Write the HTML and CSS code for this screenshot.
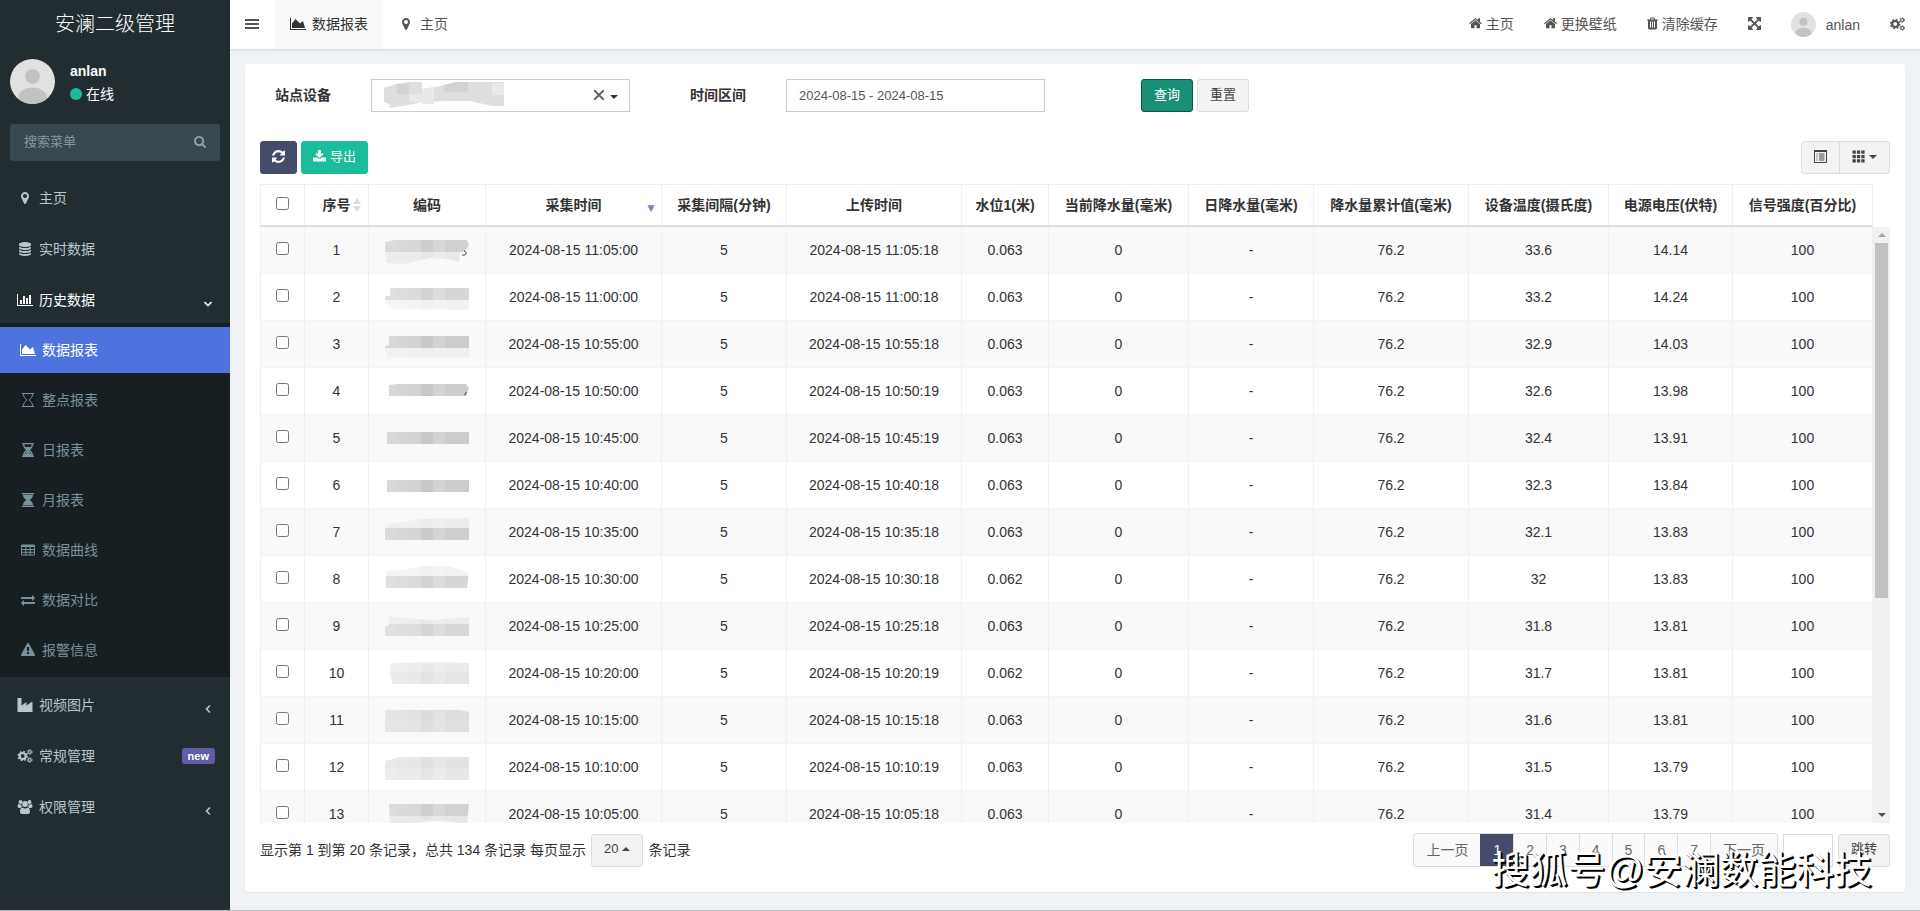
FILE: index.html
```
<!DOCTYPE html>
<html lang="zh-CN">
<head>
<meta charset="utf-8">
<title>数据报表</title>
<link rel="stylesheet" href="styles.css">
</head>
<body>
<svg class="sprite" aria-hidden="true">
  <symbol id="i-bars" viewBox="0 0 14 14"><path d="M0 2h14v2H0zM0 6h14v2H0zM0 10h14v2H0z"/></symbol>
  <symbol id="i-area" viewBox="0 0 2048 1792"><path d="M2048 1536v128h-2048v-1536h128v1408h1920zm-384-1024l256 896h-1664v-576l448-576 576 576z"/></symbol>
  <symbol id="i-bar" viewBox="0 0 2048 1792"><path d="M640 896v512h-256v-512h256zm384-512v1024h-256v-1024h256zm1024 1152v128h-2048v-1536h128v1408h1920zm-640-896v768h-256v-768h256zm384-384v1152h-256v-1152h256z"/></symbol>
  <symbol id="i-marker" viewBox="0 0 1792 1792"><path d="M1152 640q0-106-75-181t-181-75-181 75-75 181 75 181 181 75 181-75 75-181zm256 0q0 109-33 179l-364 774q-16 33-47.5 52t-67.5 19-67.5-19-46.5-52l-365-774q-33-70-33-179 0-212 150-362t362-150 362 150 150 362z"/></symbol>
  <symbol id="i-home" viewBox="64 96 1664 1664"><path d="M1472 992v480q0 26-19 45t-45 19h-384v-384h-256v384h-384q-26 0-45-19t-19-45v-480q0-1 .5-3t.5-3l575-474 575 474q1 2 1 6zm223-69l-62 74q-8 9-21 11h-3q-13 0-21-7l-692-577-692 577q-12 8-24 7-13-2-21-11l-62-74q-8-10-7-23.5t11-21.5l719-599q32-26 76-26t76 26l244 204v-195q0-14 9-23t23-9h192q14 0 23 9t9 23v408l219 182q10 8 11 21.5t-7 23.5z"/></symbol>
  <symbol id="i-trash" viewBox="192 96 1408 1600"><path d="M704 1376v-704q0-14-9-23t-23-9h-64q-14 0-23 9t-9 23v704q0 14 9 23t23 9h64q14 0 23-9t9-23zm256 0v-704q0-14-9-23t-23-9h-64q-14 0-23 9t-9 23v704q0 14 9 23t23 9h64q14 0 23-9t9-23zm256 0v-704q0-14-9-23t-23-9h-64q-14 0-23 9t-9 23v704q0 14 9 23t23 9h64q14 0 23-9t9-23zm-544-992h448l-48-117q-7-9-17-11h-317q-10 2-17 11zm928 32v64q0 14-9 23t-23 9h-96v948q0 83-47 143.5t-113 60.5h-832q-66 0-113-58.5t-47-141.5v-952h-96q-14 0-23-9t-9-23v-64q0-14 9-23t23-9h309l70-167q15-37 54-63t79-26h320q40 0 79 26t54 63l70 167h309q14 0 23 9t9 23z"/></symbol>
  <symbol id="i-expand" viewBox="128 128 1536 1536"><path d="M1411 541l-355 355 355 355 144-144q29-31 70-14 39 17 39 59v448q0 26-19 45t-45 19h-448q-42 0-59-40-17-39 14-69l144-144-355-355-355 355 144 144q31 30 14 69-17 40-59 40h-448q-26 0-45-19t-19-45v-448q0-42 40-59 39-17 69 14l144 144 355-355-355-355-144 144q-19 19-45 19-12 0-24-5-40-17-40-59v-448q0-26 19-45t45-19h448q42 0 59 40 17 39-14 69l-144 144 355 355 355-355-144-144q-31-30-14-69 17-40 59-40h448q26 0 45 19t19 45v448q0 42-39 59-13 5-25 5-26 0-45-19z"/></symbol>
  <symbol id="i-search" viewBox="64 128 1664 1664"><path d="M1216 832q0-185-131.5-316.5t-316.5-131.5-316.5 131.5-131.5 316.5 131.5 316.5 316.5 131.5 316.5-131.5 131.5-316.5zm512 832q0 52-38 90t-90 38q-54 0-90-38l-343-342q-179 124-399 124-143 0-273.5-55.5t-225-150-150-225-55.5-273.5 55.5-273.5 150-225 225-150 273.5-55.5 273.5 55.5 225 150 150 225 55.5 273.5q0 220-124 399l343 343q37 37 37 90z"/></symbol>
  <symbol id="i-refresh" viewBox="128 128 1536 1536"><path d="M1639 1056q0 5-1 7-64 268-268 434.5t-478 166.5q-146 0-282.5-55t-243.5-157l-129 129q-19 19-45 19t-45-19-19-45v-448q0-26 19-45t45-19h448q26 0 45 19t19 45-19 45l-137 137q71 66 161 102t187 36q134 0 250-65t186-179q11-17 53-117 8-23 30-23h192q13 0 22.500 9.500t9.500 22.500zm25-800v448q0 26-19 45t-45 19h-448q-26 0-45-19t-19-45 19-45l138-138q-148-137-349-137-134 0-250 65t-186 179q-11 17-53 117-8 23-30 23h-199q-13 0-22.500-9.500t-9.500-22.500v-7q65-268 270-434.500t480-166.500q146 0 284 55.500t245 156.500l130-129q19-19 45-19t45 19 19 45z"/></symbol>
  <symbol id="i-download" viewBox="64 64 1664 1664"><path d="M1344 1344q0-26-19-45t-45-19-45 19-19 45 19 45 45 19 45-19 19-45zm256 0q0-26-19-45t-45-19-45 19-19 45 19 45 45 19 45-19 19-45zm128-224v320q0 40-28 68t-68 28h-1472q-40 0-68-28t-28-68v-320q0-40 28-68t68-28h465l135 136q58 56 136 56t136-56l136-136h464q40 0 68 28t28 68zm-325-569q17 41-14 70l-448 448q-18 19-45 19t-45-19l-448-448q-31-29-14-70 17-39 59-39h256v-448q0-26 19-45t45-19h256q26 0 45 19t19 45v448h256q42 0 59 39z"/></symbol>
  <symbol id="i-exchange" viewBox="0 0 1792 1792"><path d="M1792 1184v192q0 13-9.500 22.500t-22.500 9.500h-1376v192q0 13-9.500 22.500t-22.500 9.500q-12 0-24-10l-319-320q-9-9-9-22 0-14 9-23l320-320q9-9 23-9 13 0 22.500 9.500t9.500 22.500v192h1376q13 0 22.500 9.500t9.500 22.500zm0-544q0 14-9 23l-320 320q-9 9-23 9-13 0-22.500-9.500t-9.500-22.500v-192h-1376q-13 0-22.500-9.500t-9.500-22.500v-192q0-13 9.500-22.500t22.500-9.500h1376v-192q0-14 9-23t23-9q12 0 24 10l319 319q9 9 9 23z"/></symbol>
  <symbol id="i-warning" viewBox="0 0 1792 1792"><path d="M1024 1375v-190q0-14-9.500-23.500t-22.500-9.500h-192q-13 0-22.500 9.500t-9.500 23.500v190q0 14 9.500 23.500t22.500 9.500h192q13 0 22.500-9.500t9.500-23.500zm-2-374l18-459q0-12-10-19-13-11-24-11h-220q-11 0-24 11-10 7-10 21l17 457q0 10 10 16.500t24 6.500h185q14 0 23.500-6.500t10.500-16.500zm-14-934l768 1408q35 63-2 126-17 29-46.500 46t-63.500 17h-1536q-34 0-63.500-17t-46.500-46q-37-63-2-126l768-1408q17-31 47-49t65-18 65 18 47 49z"/></symbol>
  <symbol id="i-database" viewBox="0 0 14 14"><path d="M1 2.200C1 1 3.700 0 7 0s6 1 6 2.200v.8c0 1.200-2.700 2-6 2s-6-.8-6-2zM1 4.700c1.200.9 3.500 1.300 6 1.300s4.800-.4 6-1.300V6c0 1.200-2.700 2-6 2s-6-.8-6-2zM1 7.700C2.200 8.600 4.500 9 7 9s4.800-.4 6-1.300V9c0 1.200-2.700 2-6 2s-6-.8-6-2zM1 10.700c1.200.9 3.500 1.300 6 1.300s4.800-.4 6-1.300v1.100C13 13 10.300 14 7 14s-6-1-6-2.200z"/></symbol>
  <symbol id="i-glass-o" viewBox="0 0 14 14"><path d="M1 .5h12M1 13.500h12M2.500 1c0 3 1.500 4.500 3.500 6-2 1.500-3.500 3-3.500 6M11.500 1c0 3-1.500 4.500-3.500 6 2 1.500 3.500 3 3.500 6" fill="none" stroke="currentColor"/></symbol>
  <symbol id="i-glass-half" viewBox="0 0 14 14"><path d="M1 .5h12M1 13.500h12M2.500 1c0 3 1.500 4.500 3.500 6-2 1.500-3.500 3-3.500 6M11.500 1c0 3-1.500 4.500-3.500 6 2 1.500 3.500 3 3.500 6" fill="none" stroke="currentColor" stroke-width="1.300"/><path d="M3.500 4h7L7.700 7.200 8 8.500l2 1.500h-6l2-1.500.3-1.300zM3 11.500l2-1.200h4l2 1.200V13H3z"/></symbol>
  <symbol id="i-glass" viewBox="0 0 14 14"><path d="M.8 0h12.400v1.300H.8zM.8 12.700h12.400V14H.8zM2 1.700h10C12 4.500 10.500 5.800 8.600 7 10.500 8.200 12 9.500 12 12.300H2C2 9.500 3.500 8.200 5.400 7 3.500 5.800 2 4.500 2 1.700z"/></symbol>
  <symbol id="i-table" viewBox="0 0 14 14"><path fill-rule="evenodd" d="M1.200 1.500h11.600c.7 0 1.200.5 1.200 1.200v8.600c0 .7-.5 1.200-1.200 1.200H1.200C.5 12.500 0 12 0 11.300V2.700c0-.7.5-1.200 1.200-1.200zM1 4v2h3.300V4zm4.300 0v2h3.400V4zm4.400 0v2H13V4zM1 7v1.800h3.300V7zm4.300 0v1.800h3.400V7zm4.400 0v1.800H13V7zM1 9.800v1.700h3.300V9.800zm4.300 0v1.700h3.400V9.800zm4.400 0v1.700H13V9.800z"/></symbol>
  <symbol id="i-industry" viewBox="0 0 15 14"><path d="M0 14V0h4v7.500L9 4v3.500L14 4c.6-.4 1 0 1 .5V14z"/></symbol>
  <symbol id="i-cogs" viewBox="0 0 15 14"><g fill="none" stroke="currentColor"><circle cx="5.200" cy="7" r="3" stroke-width="2.200"/><circle cx="5.200" cy="7" r="4.500" stroke-width="1.500" stroke-dasharray="1.770 1.764"/><circle cx="12.200" cy="3" r="1.500" stroke-width="1.200"/><circle cx="12.200" cy="3" r="2.400" stroke-width=".8" stroke-dasharray="1.260 1.253"/><circle cx="12.200" cy="11" r="1.500" stroke-width="1.200"/><circle cx="12.200" cy="11" r="2.400" stroke-width=".8" stroke-dasharray="1.260 1.253"/></g></symbol>
  <symbol id="i-users" viewBox="0 0 15 14"><circle cx="3" cy="2" r="2"/><circle cx="12" cy="2" r="2"/><circle cx="7.500" cy="4" r="2.900"/><path d="M.1 6.500C0 5 .4 4 1.200 4c1 .7 2 .7 2.700.4-.1 1.300.3 2 .8 2.700-.7 0-1.300.3-1.700.8H1.500C.6 7.900.1 7.400.1 6.500zM14.900 6.500c.1-1.500-.3-2.500-1.100-2.500-1 .7-2 .7-2.700.4.1 1.300-.3 2-.8 2.700.7 0 1.300.3 1.700.8h1.500c.9 0 1.400-.5 1.400-1.400zM2.500 12c0-2.600.7-4.400 2.400-4.400 1.500 1.300 3.700 1.300 5.200 0 1.700 0 2.400 1.800 2.400 4.400 0 1.300-.8 2-2 2h-6c-1.200 0-2-.7-2-2z"/></symbol>
  <symbol id="i-down" viewBox="0 0 10 10"><path d="M1.500 3L5 6.500 8.500 3" fill="none" stroke="currentColor" stroke-width="1.600"/></symbol>
  <symbol id="i-left" viewBox="0 0 10 10"><path d="M7 1.500L3.500 5 7 8.500" fill="none" stroke="currentColor" stroke-width="1.600"/></symbol>
  <symbol id="i-list" viewBox="0 0 13 13"><path fill-rule="evenodd" d="M0 0h13v13H0zM1 2v10h11V2zM2.500 3.500h1v1h-1zM5 3.500h5.500v1H5zM2.500 5.500h1v1h-1zM5 5.500h5.500v1H5zM2.500 7.500h1v1h-1zM5 7.500h5.500v1H5zM2.500 9.500h1v1h-1zM5 9.500h5.500v1H5z"/></symbol>
  <symbol id="i-grid" viewBox="0 0 13 13"><path d="M.5.500h3.300v3.300H.5zM4.900.500h3.300v3.300H4.900zM9.300.500h3.300v3.300H9.300zM.5 4.900h3.300v3.300H.5zM4.900 4.900h3.300v3.300H4.900zM9.300 4.900h3.300v3.300H9.300zM.5 9.300h3.300v3.300H.5zM4.900 9.300h3.300v3.300H4.900zM9.300 9.300h3.300v3.300H9.300z"/></symbol>
  <symbol id="i-caret" viewBox="0 0 8 4"><path d="M0 0h8L4 4z"/></symbol>
  <symbol id="i-caret-up" viewBox="0 0 8 4"><path d="M0 4h8L4 0z"/></symbol>
  <symbol id="i-close" viewBox="0 0 10 10"><path d="M1 1l8 8M9 1L1 9" fill="none" stroke="currentColor" stroke-width="1.600"/></symbol>
  <symbol id="i-sort" viewBox="0 0 8 14"><path d="M0 6h8L4 0zM0 8h8l-4 6z"/></symbol>
  <symbol id="i-avatar" viewBox="0 0 45 45"><clipPath id="round"><circle cx="22.500" cy="22.500" r="22.500"/></clipPath><g clip-path="url(#round)"><path fill="#e1e1e1" d="M0 0h45v45H0z"/><circle cx="22.500" cy="17.500" r="7.300" fill="#c2c2c2"/><ellipse cx="22.500" cy="39" rx="14.500" ry="10.500" fill="#c2c2c2"/></g></symbol>
</svg>

<div class="app">
  <aside class="sidebar">
    <a class="logo" href="#">安澜二级管理</a>
    <div class="user">
      <svg class="user-pic"><use href="#i-avatar"/></svg>
      <div class="user-info">
        <strong>anlan</strong>
        <span class="status"><i class="dot"></i>在线</span>
      </div>
    </div>
    <form class="search">
      <input type="text" placeholder="搜索菜单" aria-label="搜索菜单">
      <button type="button" aria-label="搜索"><svg class="ico"><use href="#i-search"/></svg></button>
    </form>
    <nav class="menu">
      <a href="#"><svg class="ico"><use href="#i-marker"/></svg>主页</a>
      <a href="#"><svg class="ico"><use href="#i-database"/></svg>实时数据</a>
      <a href="#" class="open"><svg class="ico"><use href="#i-bar"/></svg>历史数据<svg class="arrow"><use href="#i-down"/></svg></a>
      <div class="submenu">
        <a href="#" class="active"><svg class="ico"><use href="#i-area"/></svg>数据报表</a>
        <a href="#"><svg class="ico"><use href="#i-glass-o"/></svg>整点报表</a>
        <a href="#"><svg class="ico"><use href="#i-glass-half"/></svg>日报表</a>
        <a href="#"><svg class="ico"><use href="#i-glass"/></svg>月报表</a>
        <a href="#"><svg class="ico"><use href="#i-table"/></svg>数据曲线</a>
        <a href="#"><svg class="ico"><use href="#i-exchange"/></svg>数据对比</a>
        <a href="#"><svg class="ico"><use href="#i-warning"/></svg>报警信息</a>
      </div>
      <a href="#"><svg class="ico"><use href="#i-industry"/></svg>视频图片<svg class="arrow"><use href="#i-left"/></svg></a>
      <a href="#"><svg class="ico"><use href="#i-cogs"/></svg>常规管理<span class="badge">new</span></a>
      <a href="#"><svg class="ico"><use href="#i-users"/></svg>权限管理<svg class="arrow"><use href="#i-left"/></svg></a>
    </nav>
  </aside>

  <div class="main">
    <header class="topbar">
      <button class="toggle" type="button" aria-label="菜单"><svg class="ico"><use href="#i-bars"/></svg></button>
      <nav class="tabs">
        <a href="#" class="current"><svg class="ico"><use href="#i-area"/></svg>数据报表</a>
        <a href="#"><svg class="ico"><use href="#i-marker"/></svg>主页</a>
      </nav>
      <nav class="tools">
        <a href="#"><svg class="ico"><use href="#i-home"/></svg>主页</a>
        <a href="#"><svg class="ico"><use href="#i-home"/></svg>更换壁纸</a>
        <a href="#"><svg class="ico slim"><use href="#i-trash"/></svg>清除缓存</a>
        <a href="#" aria-label="全屏"><svg class="ico"><use href="#i-expand"/></svg></a>
        <a href="#" class="me"><svg class="me-pic"><use href="#i-avatar"/></svg>anlan</a>
        <a href="#" aria-label="设置"><svg class="ico cogs"><use href="#i-cogs"/></svg></a>
      </nav>
    </header>

    <main class="content">
      <section class="panel">
        <form class="filters">
          <div class="field">
            <label for="site">站点设备</label>
            <div class="picker">
              <select id="site" class="control"><option></option></select>
              <svg class="masked-name" viewBox="0 0 120 26"><path fill="#dedede" d="M0 6l12-4 11-2h15v7l14-2 20-5h48v24h-12l-22-5H64L38 20l-14 3-18 3-1-4-5-2z"/><path fill="#d3d3d3" d="M13 2h12v10H13zM60 3l12-3h12v10H60z"/><path fill="#e9e9e9" d="M38 7l12-2v17H38zM108 1h12v12h-12zM25 12h13v8H25z"/></svg>
              <button class="clear" type="button" aria-label="清除"><svg><use href="#i-close"/></svg></button>
              <svg class="caret"><use href="#i-caret"/></svg>
            </div>
          </div>
          <div class="field">
            <label for="range">时间区间</label>
            <input id="range" class="control" type="text" value="2024-08-15 - 2024-08-15">
          </div>
          <div class="actions">
            <button class="btn query" type="button">查询</button>
            <button class="btn" type="button">重置</button>
          </div>
        </form>

        <div class="toolbar">
          <button class="btn refresh" type="button" aria-label="刷新"><svg class="ico"><use href="#i-refresh"/></svg></button>
          <button class="btn export" type="button"><svg class="ico"><use href="#i-download"/></svg>导出</button>
          <div class="group">
            <button class="btn" type="button" aria-label="切换视图"><svg class="ico"><use href="#i-list"/></svg></button>
            <button class="btn" type="button" aria-label="列"><svg class="ico"><use href="#i-grid"/></svg><svg class="caret"><use href="#i-caret"/></svg></button>
          </div>
        </div>

        <div class="grid">
          <div class="head-wrap">
            <table class="data">
              <colgroup><col class="w-check"><col class="w-no"><col class="w-code"><col class="w-taken"><col class="w-m"><col class="w-sent"><col class="w-level"><col class="w-l"><col class="w-m"><col class="w-xl"><col class="w-l"><col class="w-volt"><col class="w-l"></colgroup>
              <thead>
                <tr>
                  <th><input type="checkbox" aria-label="全选"></th>
                  <th>序号<svg class="sort"><use href="#i-sort"/></svg></th>
                  <th>编码</th>
                  <th>采集时间<span class="desc">▼</span></th>
                  <th>采集间隔(分钟)</th>
                  <th>上传时间</th>
                  <th>水位1(米)</th>
                  <th>当前降水量(毫米)</th>
                  <th>日降水量(毫米)</th>
                  <th>降水量累计值(毫米)</th>
                  <th>设备温度(摄氏度)</th>
                  <th>电源电压(伏特)</th>
                  <th>信号强度(百分比)</th>
                </tr>
              </thead>
            </table>
          </div>
          <div class="body-wrap">
            <div class="rows">
              <table class="data">
                <colgroup><col class="w-check"><col class="w-no"><col class="w-code"><col class="w-taken"><col class="w-m"><col class="w-sent"><col class="w-level"><col class="w-l"><col class="w-m"><col class="w-xl"><col class="w-l"><col class="w-volt"><col class="w-l"></colgroup>
                <tbody id="rows"></tbody>
              </table>
            </div>
            <div class="scrollbar"><svg class="up"><use href="#i-caret-up"/></svg><div class="track"><div class="thumb"></div></div><svg class="down"><use href="#i-caret"/></svg></div>
          </div>
        </div>

        <footer class="pager">
          <div class="summary">
            <span>显示第 1 到第 20 条记录，总共 134 条记录 每页显示</span>
            <button class="btn size" type="button">20<svg class="caret"><use href="#i-caret-up"/></svg></button>
            <span>条记录</span>
          </div>
          <nav class="pages">
            <a href="#">上一页</a><a href="#" class="on">1</a><a href="#">2</a><a href="#">3</a><a href="#">4</a><a href="#">5</a><a href="#">6</a><a href="#">7</a><a href="#">下一页</a>
          </nav>
          <input class="jump" type="text" aria-label="页码">
          <button class="btn go" type="button">跳转</button>
        </footer>
        <div class="watermark">搜狐号@安澜数能科技</div>
      </section>
    </main>
  </div>
</div>
<script src="app.js"></script>
</body>
</html>
```
FILE: styles.css
```
* { box-sizing: border-box; }

body {
  margin: 0;
  font: 14px/20px "Liberation Sans", "Noto Sans CJK SC", sans-serif;
  color: #333;
  background: #eff3f5;
}

a { color: inherit; text-decoration: none; }
button, input, select { font: inherit; color: inherit; margin: 0; }
button { cursor: pointer; }
svg { fill: currentColor; flex: none; display: block; }
.sprite { position: absolute; width: 0; height: 0; }
.ico { width: 14px; height: 14px; }
.caret { width: 8px; height: 4px; }

.app {
  display: flex;
  height: 100vh;
  overflow: hidden;
  border-bottom: 1px solid #b4b8bd;
}

/* Sidebar */
.sidebar {
  flex: none;
  width: 230px;
  background: #222d32;
  color: #b8c7ce;
}
.logo {
  display: block;
  height: 50px;
  line-height: 49px;
  font-size: 20px;
  font-weight: 300;
  text-align: center;
  color: #fff;
}
.user {
  display: flex;
  gap: 15px;
  padding: 9px 10px 0;
  color: #fff;
}
.user-pic { width: 45px; height: 45px; }
.user-info { display: flex; flex-direction: column; gap: 3px; padding-top: 2px; }
.status { display: flex; align-items: center; gap: 4px; }
.dot { width: 12px; height: 12px; border-radius: 50%; background: #1abc9c; }
.search {
  display: flex;
  height: 37px;
  margin: 20px 10px 9px;
  border-radius: 3px;
  background: #374850;
}
.search input {
  flex: 1;
  min-width: 0;
  padding: 0 14px 2px;
  border: 0;
  background: none;
  font-size: 13px;
}
.search input::placeholder { color: #8b989e; }
.search button {
  padding: 0 14px 2px;
  border: 0;
  background: none;
  color: #98a4a9;
}
.search .ico { width: 12px; height: 12px; }

.menu { display: flex; flex-direction: column; }
.menu a {
  display: flex;
  align-items: center;
  gap: 4px;
  height: 46px;
  padding: 0 15px;
}
.menu > a { margin-top: 5px; }
.menu .ico { width: 20px; }
.menu .open { color: #fff; }
.arrow { width: 10px; height: 10px; margin: 8px 2px 0 auto; }
.submenu {
  display: flex;
  flex-direction: column;
  gap: 4px;
  padding: 4px 0;
  background: #181f23;
  color: #78929d;
}
.submenu a { padding-left: 18px; }
.submenu .active { background: #4e73df; color: #fff; }
.badge {
  margin-left: auto;
  padding: 0 6px;
  border-radius: 3px;
  background: #605ca8;
  color: #fff;
  font-size: 11px;
  font-weight: bold;
  line-height: 16px;
}

/* Top bar */
.main { flex: 1; min-width: 0; display: flex; flex-direction: column; }
.topbar {
  display: flex;
  height: 50px;
  background: #fff;
  color: #555;
  border-bottom: 1px solid #d9dee1;
  box-shadow: 0 1px 2px rgba(0, 0, 0, .06);
}
.toggle { width: 45px; padding: 0 15px 2px; border: 0; background: none; }
.tabs, .tools { display: flex; }
.tabs a, .tools a {
  display: flex;
  align-items: center;
  padding: 0 15px 2px;
}
.tabs a { gap: 6px; }
.tabs .ico { width: 16px; }
.tabs .current { background: #f9f9f9; color: #333; }
.tools { margin-left: auto; }
.tools a { gap: 4px; }
.tools .ico { width: 13px; height: 13px; }
.tools .slim { width: 11px; }
.tools .cogs { width: 15px; height: 14px; }
.tools .me { gap: 10px; padding-bottom: 0; }
.me-pic { width: 25px; height: 25px; }

/* Panel */
.content { flex: 1; min-height: 0; display: flex; padding: 14px 15px 18px; }
.panel {
  position: relative;
  flex: 1;
  min-width: 0;
  display: flex;
  flex-direction: column;
  padding: 15px 15px 25px;
  background: #fff;
  border-radius: 3px;
  box-shadow: 0 1px 1px rgba(0, 0, 0, .06);
}
.filters {
  display: grid;
  grid-template-columns: repeat(4, 1fr);
  margin: 0 -15px 29px;
}
.field { display: flex; align-items: center; padding: 0 30px; }
.field label { flex: none; width: 96px; padding-bottom: 2px; font-weight: bold; }
.control {
  flex: 1;
  width: 100%;
  min-width: 0;
  height: 33px;
  padding: 0 12px;
  border: 1px solid #ccc;
  border-radius: 0;
  background: #fff;
  color: #555;
  font-size: 13px;
}
.picker { position: relative; flex: 1; display: flex; }
.picker .control { appearance: none; }
.masked-name { position: absolute; left: 13px; top: 3px; width: 120px; height: 26px; }
.clear {
  position: absolute;
  right: 25px;
  top: 10px;
  padding: 0;
  border: 0;
  background: none;
  color: #666;
}
.clear svg { width: 12px; height: 12px; }
.picker .caret { position: absolute; right: 12px; top: 16px; color: #333; }
.actions { display: flex; gap: 4px; padding-left: 66px; }

.btn {
  display: flex;
  align-items: center;
  justify-content: center;
  gap: 4px;
  height: 33px;
  padding: 0 12px 2px;
  border: 1px solid #ddd;
  border-radius: 3px;
  background: #f3f3f3;
  color: #444;
  font-size: 13px;
  line-height: 18px;
}
.query { background: #188f76; border-color: #0d5646; color: #fff; }
.refresh { padding: 0 11px 2px; background: #444c69; border-color: #444c69; color: #fff; }
.export { padding: 0 11px 2px; background: #1abc9c; border-color: #1abc9c; color: #fff; }
.refresh .ico, .export .ico { width: 13px; height: 13px; }

.toolbar { display: flex; gap: 4px; margin-bottom: 10px; }
.group { display: flex; margin-left: auto; }
.group .ico { width: 13px; height: 13px; }
.group .btn:first-child { border-radius: 3px 0 0 3px; }
.group .btn:last-child { margin-left: -1px; border-radius: 0 3px 3px 0; }

/* Table */
.grid { flex: 1; min-height: 0; display: flex; flex-direction: column; }
.head-wrap { padding-right: 17px; }
.body-wrap { flex: 1; min-height: 0; display: flex; }
.rows { flex: 1; min-width: 0; overflow: hidden; }
.data {
  width: 100%;
  table-layout: fixed;
  border-collapse: separate;
  border-spacing: 0;
  text-align: center;
}
.data th, .data td {
  position: relative;
  padding: 0;
  border-right: 1px solid #f0f0f0;
  white-space: nowrap;
}
.data th:first-child, .data td:first-child { border-left: 1px solid #f0f0f0; }
.data th { height: 43px; border-top: 1px solid #eee; border-bottom: 2px solid #ddd; }
.data td { height: 47px; border-bottom: 1px solid #f3f3f3; }
.data tbody tr:nth-child(odd) { background: #f9f9f9; }
.data input { display: block; width: 13px; height: 13px; margin: 0 auto 3px; }
.data td svg { display: block; margin: 0 auto; width: 84px; height: 30px; }
.sort { position: absolute; right: 7px; top: 13px; width: 8px; height: 14px; color: #ddd; }
.desc { position: absolute; right: 4px; top: 13px; font-size: 12px; color: #7d7fb8; }
.w-check { width: 45px; }
.w-no { width: 64px; }
.w-code { width: 117px; }
.w-taken { width: 176px; }
.w-sent { width: 175px; }
.w-level { width: 87px; }
.w-volt { width: 124px; }
.w-m { width: 125px; }
.w-l { width: 140px; }
.w-xl { width: 155px; }

.scrollbar {
  flex: none;
  width: 17px;
  display: flex;
  flex-direction: column;
  align-items: center;
  padding: 6px 0;
  gap: 6px;
  background: #f1f1f1;
  color: #505050;
}
.scrollbar svg { width: 8px; height: 4px; }
.scrollbar .up { color: #a3a3a3; }
.track { flex: 1; width: 13px; }
.thumb { height: 63%; background: #c1c1c1; }

/* Pager */
.pager { display: flex; align-items: center; gap: 5px; padding-top: 10px; }
.summary { display: flex; align-items: center; gap: 5px; margin-right: auto; }
.pages { display: flex; border: 1px solid #ddd; border-radius: 3px; background: #fafafa; color: #666; }
.pages a { padding: 6px 12px; border-left: 1px solid #ddd; }
.pages a:first-child { border-left: 0; }
.pages .on { background: #444c69; border-color: #444c69; color: #fff; }
.jump { width: 50px; height: 33px; border: 1px solid #ddd; }

.watermark {
  position: absolute;
  right: 33px;
  bottom: 0;
  font-size: 38px;
  line-height: 44px;
  color: #fff;
  text-shadow: 1px 1px 0 #000, 2px 2px 0 #000;
  white-space: nowrap;
  pointer-events: none;
}
```
FILE: app.js
```
// Masked codes: bands of [y, height, opacity], and the outline that cuts them.
const records = [
  ['11:05:00', '11:05:18', '0.063', '33.6', '14.14', [[5, 12, .9], [17, 12, .35]], '0,7 10,5 82,5 84,10 80,16 75,18 74,27 62,24 45,23 18,29 2,28 0,17'],
  ['11:00:00', '11:00:18', '0.063', '33.2', '14.24', [[6, 12, .8], [18, 10, .25]], '5,6 84,6 84,28 6,27 0,20 0,14 5,14'],
  ['10:55:00', '10:55:18', '0.063', '32.9', '14.03', [[7, 12, 1], [19, 10, .2]], '4,7 84,7 84,28 3,29 0,20 0,17 4,16'],
  ['10:50:00', '10:50:19', '0.063', '32.6', '13.98', [[8, 12, 1]], '4,9 12,8 81,8 84,12 81,20 4,20'],
  ['10:45:00', '10:45:19', '0.063', '32.4', '13.91', [[9, 12, 1]], '2,9 84,9 84,21 2,21'],
  ['10:40:00', '10:40:18', '0.063', '32.3', '13.84', [[10, 12, 1]], '2,10 84,10 84,22 2,22'],
  ['10:35:00', '10:35:18', '0.063', '32.1', '13.83', [[1, 10, .25], [11, 12, .95]], '0,8 35,2 84,1 84,23 0,23'],
  ['10:30:00', '10:30:18', '0.062', '32', '13.83', [[2, 10, .25], [12, 12, .8]], '1,7 18,6 36,2 62,2 84,8 82,24 1,24'],
  ['10:25:00', '10:25:18', '0.063', '31.8', '13.81', [[5, 8, .3], [13, 12, .75]], '4,5 20,7 45,9 84,6 84,25 0,25 0,16 4,14'],
  ['10:20:00', '10:20:19', '0.062', '31.7', '13.81', [[4, 10, .4], [14, 12, .5]], '6,5 60,4 84,5 84,26 7,26 5,15'],
  ['10:15:00', '10:15:18', '0.063', '31.6', '13.81', [[5, 10, .6], [15, 12, .55]], '0,5 75,5 84,7 84,27 0,27'],
  ['10:10:00', '10:10:19', '0.063', '31.5', '13.79', [[5, 11, .55], [16, 12, .45]], '0,9 15,5 84,5 84,28 0,28'],
  ['10:05:00', '10:05:18', '0.063', '31.4', '13.79', [[5, 12, .85], [17, 9, .4]], '4,5 84,5 82,25 60,22 45,22 24,25 5,25']
];
const tones = ['#d8d8d8', '#d5d5d5', '#d3d3d3', '#c7c8c9', '#d6d2d2', '#cacccd', '#cbccce'];

function mask(bands, outline, id) {
  const cells = bands.map(([y, h, o]) =>
    `<g opacity="${o}">` + tones.map((c, i) => `<rect x="${i * 12}" y="${y}" width="12" height="${h}" fill="${c}"/>`).join('') + '</g>'
  ).join('');
  const tail = id === 1
    ? '<path d="M77 20c4 1 6-3 2-4" fill="none" stroke="#444"/>'
    : id === 4 ? '<path d="M79 19c2-1 2-1 2-3" fill="none" stroke="#444"/>' : '';
  return `<svg viewBox="0 0 84 30"><clipPath id="m${id}"><polygon points="${outline}"/></clipPath><g clip-path="url(#m${id})" shape-rendering="crispEdges">${cells}</g>${tail}</svg>`;
}

document.getElementById('rows').innerHTML = records.map(([taken, sent, level, temp, volt, bands, outline], i) => {
  const n = i + 1;
  const cells = [
    `<input type="checkbox" aria-label="选择 ${n}">`, n, mask(bands, outline, n),
    '2024-08-15 ' + taken, 5, '2024-08-15 ' + sent, level, 0, '-', '76.2', temp, volt, 100
  ];
  return '<tr>' + cells.map(c => `<td>${c}</td>`).join('') + '</tr>';
}).join('');
```
